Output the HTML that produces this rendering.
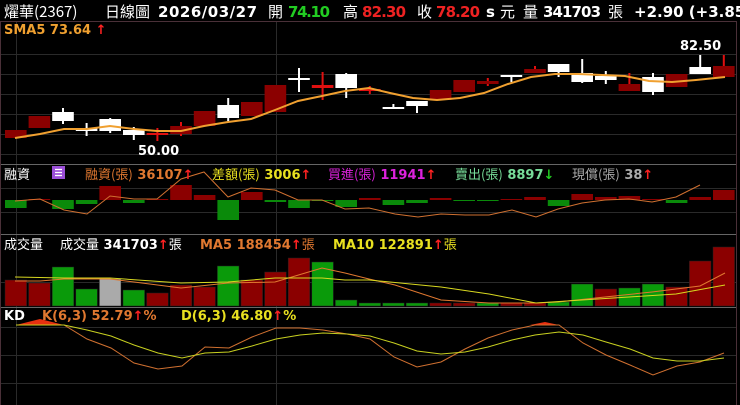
<!DOCTYPE html>
<html><head><meta charset="utf-8"><style>
html,body{margin:0;padding:0;background:#000;width:740px;height:405px;overflow:hidden}
svg{display:block}
text{font-family:"DejaVu Sans","Noto Sans CJK TC",sans-serif;font-size:13px;font-weight:bold}
.n{font-weight:normal;font-family:"Noto Sans CJK TC","DejaVu Sans",sans-serif}
.h{font-size:15px}
</style></head><body>
<svg id="s" width="740" height="405" viewBox="0 0 740 405" xmlns="http://www.w3.org/2000/svg">
<rect width="740" height="405" fill="#000"/>
<g id="grid" stroke="#2a2a2a" stroke-width="1"></g>
<g id="bars"></g>
<g id="lines" fill="none"></g>
<g stroke="#4a3038" stroke-width="1" fill="none">
<line x1="0" y1="21.5" x2="736" y2="21.5"/>
<line x1="0" y1="164.5" x2="736" y2="164.5" stroke="#666"/>
<line x1="0" y1="234.5" x2="736" y2="234.5" stroke="#666"/>
<line x1="0" y1="307.5" x2="736" y2="307.5" stroke="#666"/>
<line x1="736.5" y1="21" x2="736.5" y2="405"/>
<line x1="0.5" y1="21" x2="0.5" y2="405"/>
</g>
<text x="4" y="17" fill="#fff" class="n h">燿華(2367)</text>
<text x="105" y="17" fill="#fff" class="n h">日線圖</text>
<text x="158" y="17" fill="#fff" class="h" textLength="99">2026/03/27</text>
<text x="268" y="17" fill="#fff" class="n h">開</text>
<text x="288" y="17" fill="#22cc22" class="h" textLength="42">74.10</text>
<text x="343" y="17" fill="#fff" class="n h">高</text>
<text x="362" y="17" fill="#ee2222" class="h" textLength="44">82.30</text>
<text x="417" y="17" fill="#fff" class="n h">收</text>
<text x="436" y="17" fill="#ee2222" class="h" textLength="44">78.20</text>
<text x="486" y="17" fill="#fff" class="h">s</text>
<text x="500" y="17" fill="#fff" class="n h">元</text>
<text x="523" y="17" fill="#fff" class="n h">量</text>
<text x="543" y="17" fill="#fff" class="h" textLength="58">341703</text>
<text x="608" y="17" fill="#fff" class="n h">張</text>
<text x="634" y="17" fill="#fff" class="h">+2.90 (+3.85</text>
<text x="4" y="34" fill="#f0a030">SMA5 73.64 <tspan fill="#ff2222">↑</tspan></text>
<text x="138" y="155" fill="#fff">50.00</text>
<text x="680" y="50" fill="#fff">82.50</text>
<text x="4" y="179" fill="#fff" class="n">融資</text>
<rect x="52" y="166" width="13" height="13" fill="#9b4fd8"/>
<g stroke="#fff" stroke-width="1.3"><line x1="55" y1="169.5" x2="62" y2="169.5"/><line x1="55" y1="172.5" x2="62" y2="172.5"/><line x1="55" y1="175.5" x2="62" y2="175.5"/></g>
<text x="85" y="179" fill="#e07830"><tspan class="n">融資(張)</tspan> 36107<tspan fill="#ff2222">↑</tspan></text>
<text x="212" y="179" fill="#e8e020"><tspan class="n">差額(張)</tspan> 3006<tspan fill="#ff2222">↑</tspan></text>
<text x="328" y="179" fill="#dd22dd"><tspan class="n">買進(張)</tspan> 11941<tspan fill="#ff2222">↑</tspan></text>
<text x="455" y="179" fill="#77dd99"><tspan class="n">賣出(張)</tspan> 8897<tspan fill="#22cc22">↓</tspan></text>
<text x="572" y="179" fill="#aaa"><tspan class="n">現償(張)</tspan> 38<tspan fill="#ff2222">↑</tspan></text>
<text x="4" y="249" fill="#fff" class="n">成交量</text>
<text x="60" y="249" fill="#fff"><tspan class="n">成交量</tspan> 341703<tspan fill="#ff2222">↑</tspan><tspan class="n">張</tspan></text>
<text x="200" y="249" fill="#e07830">MA5 188454<tspan fill="#ff2222">↑</tspan><tspan class="n">張</tspan></text>
<text x="333" y="249" fill="#e8e020">MA10 122891<tspan fill="#ff2222">↑</tspan><tspan class="n">張</tspan></text>
<text x="4" y="320" fill="#fff">KD</text>
<text x="42" y="320" fill="#e07830">K(6,3) 52.79<tspan fill="#ff2222">↑</tspan>%</text>
<text x="181" y="320" fill="#e8e020">D(6,3) 46.80<tspan fill="#ff2222">↑</tspan>%</text>
</svg>
<script>
var NS="http://www.w3.org/2000/svg";
function el(p,t,a){var e=document.createElementNS(NS,t);for(var k in a)e.setAttribute(k,a[k]);document.getElementById(p).appendChild(e);return e;}
[54,74,94,114,134,154,188,212,282,327,355,383].forEach(function(y){el("grid","line",{x1:1,x2:736,y1:y+.5,y2:y+.5});});
[16,276].forEach(function(x){el("grid","line",{x1:x+.5,x2:x+.5,y1:22,y2:405});});
var W=23.6,X0=4;
var C=[["r",130,138,130,138],["r",116,128,116,128],["w",112,121,108,124],["w",128,131,123,136],["w",119,131,118,133],["w",130,135,127,140],["x",133,134,128,141],["r",126,134,122,136],["r",111,126,111,126],["w",105,118,98,121],["r",102,116,102,116],["r",85,112,85,112],["w",78,80,68,92],["x",85,88,72,100],["w",74,88,73,98],["x",89,91,86,94],["w",107,109,104,109],["w",101,106,101,113],["r",90,100,90,100],["r",80,92,80,92],["r",81,84,78,86],["w",75,77,75,82],["r",69,73,66,73],["w",64,72,64,77],["w",73,82,59,83],["w",76,80,71,84],["r",84,91,73,91],["w",77,92,73,95],["r",74,87,74,87],["w",67,74,55,74],["r",66,77,55,77]];
C.forEach(function(c,i){var x=X0+i*W,cx=x+W/2;var col=c[0]=="w"?"#fff":(c[0]=="r"?"#8b0000":"#e01010");var wc=c[0]=="w"?"#fff":"#e01010";
el("bars","rect",{x:cx-1,y:c[3],width:2,height:c[4]-c[3],fill:wc});
el("bars","rect",{x:x+1,y:c[1],width:W-2,height:Math.max(2,c[2]-c[1]),fill:col});});
var M=[8,-1,9,4,-14,3,-1,-15,-5,20,-8,2,8,1,7,-2,5,3,-2,1,1,-1,-3,6,-6,-3,-4,-1,3,-3,-10];
M.forEach(function(v,i){var x=X0+i*W+1;el("bars","rect",{x:x,y:v>0?200:200+v,width:W-2,height:Math.abs(v),fill:v>0?"#0a8a0a":"#8b0000"});});
var V=[[280,"r"],[283,"r"],[267,"g"],[289,"g"],[279,"s"],[290,"g"],[293,"r"],[285,"r"],[287,"r"],[266,"g"],[280,"r"],[272,"r"],[258,"r"],[262,"g"],[300,"g"],[303,"g"],[303,"g"],[303,"g"],[303,"r"],[303,"r"],[303,"g"],[303,"r"],[303,"r"],[302,"g"],[284,"g"],[289,"r"],[288,"g"],[284,"g"],[287,"r"],[261,"r"],[247,"r"]];
V.forEach(function(v,i){var x=X0+i*W+1;el("bars","rect",{x:x,y:v[0],width:W-2,height:306-v[0],fill:v[1]=="g"?"#0a9a0a":(v[1]=="r"?"#8b0000":"#aaaaaa"),stroke:"#222","stroke-width":0.5});});
function pl(pts,c,w){el("lines","polyline",{points:pts,stroke:c,"stroke-width":w||1});}
pl("15,138 40,134 64,129 87,129 110,126 134,129 157,131 181,131 204,126 228,122 251,119 275,110 298,101 322,96 345,91 369,88 390,93 413,98 437,100 460,98 484,93 508,84 531,77 555,74 578,74 602,75 625,76 649,81 672,82 696,80 725,77","#f0a030",2);
pl("15,201 40,199 64,210 87,214 110,196 134,199 157,199 181,179 204,172 228,197 251,188 275,190 298,200 322,200 345,209 369,208 395,214 418,217 441,214 465,215 489,215 512,210 536,217 558,209 582,203 605,200 629,199 652,202 676,197 700,185","#d07030");
pl("15,281 40,281 64,279 110,279 134,282 181,288 228,283 275,282 322,268 345,273 369,279 395,285 441,300 489,303 536,303 558,302 605,297 652,292 700,286 725,273","#e07830");
pl("15,277 64,278 110,278 181,283 228,282 275,278 322,278 345,280 369,280 441,287 489,294 536,303 582,300 629,297 676,294 725,285","#d8d820");
el("lines","polygon",{points:"16,325 40,319 64,325",fill:"#e83010"});
el("lines","polygon",{points:"530,325 545,322 559,325",fill:"#e83010"});
pl("16,325 64,325 87,339 111,348 134,363 158,369 182,366 205,347 229,348 252,337 276,328 300,328 323,330 347,334 370,339 394,357 417,367 441,362 465,349 488,338 512,330 535,325 559,325 583,343 606,355 630,365 653,375 677,366 700,362 724,353","#d07030");
pl("16,325 64,325 87,330 111,336 134,345 158,353 182,358 205,353 229,352 252,346 276,339 300,335 323,333 347,334 370,336 394,343 417,351 441,354 465,352 488,347 512,340 535,335 559,332 583,335 606,342 630,349 653,358 677,361 700,361 724,358","#c8d020");
</script>
</body></html>
